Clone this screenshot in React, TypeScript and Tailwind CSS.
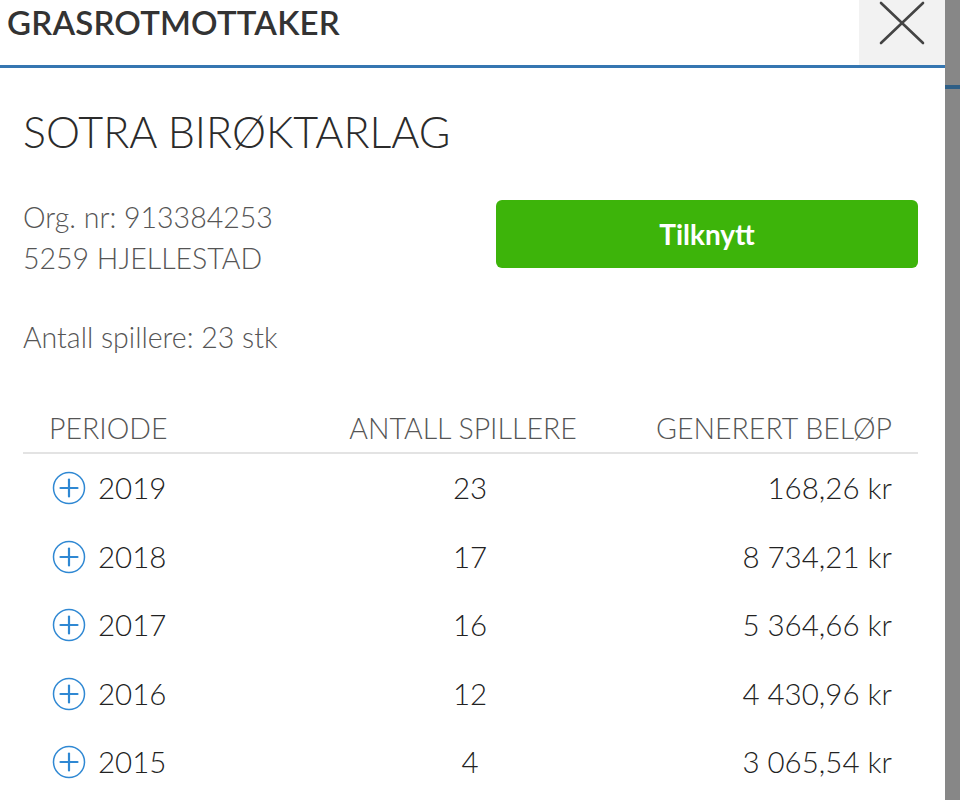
interface Row {
  year: string;
  players: number;
  amount: string;
}

const rows: Row[] = [
  { year: '2019', players: 23, amount: '168,26 kr' },
  { year: '2018', players: 17, amount: '8 734,21 kr' },
  { year: '2017', players: 16, amount: '5 364,66 kr' },
  { year: '2016', players: 12, amount: '4 430,96 kr' },
  { year: '2015', players: 4, amount: '3 065,54 kr' },
];

function PlusCircle() {
  return (
    <svg width="34" height="34" viewBox="0 0 34 34" fill="none" stroke="#2f88d3" strokeLinecap="round">
      <circle cx="17" cy="17" r="15.5" strokeWidth="1.5" />
      <line x1="17" y1="8.5" x2="17" y2="25.5" strokeWidth="2.2" />
      <line x1="8.5" y1="17" x2="25.5" y2="17" strokeWidth="2.2" />
    </svg>
  );
}

export default function App() {
  return (
    <div className="flex h-[800px] w-[960px] overflow-hidden bg-[#878787] font-['Lato',sans-serif]">
      {/* Modal */}
      <div className="flex w-[945px] flex-col bg-white">
        {/* Header */}
        <div className="flex h-[65px] items-start justify-between">
          <h2 className="pl-[7px] pt-[2px] text-[33px] font-semibold leading-[40px] tracking-[0.2px] text-[#333]">
            GRASROTMOTTAKER
          </h2>
          <button className="flex h-[65px] w-[86px] items-start justify-center bg-[#f2f2f2] pt-[1px]">
            <svg width="46" height="44" viewBox="0 0 46 44" fill="none" stroke="#444" strokeWidth="2.6" strokeLinecap="round">
              <line x1="2" y1="2" x2="44" y2="42" />
              <line x1="44" y1="2" x2="2" y2="42" />
            </svg>
          </button>
        </div>
        <div className="h-[3px] bg-[#3576b1]" />

        {/* Body */}
        <div className="flex flex-col px-[23px] pt-[39px]">
          <h1 className="text-[43px] font-light leading-[50px] text-[#2b2b2b]">SOTRA BIRØKTARLAG</h1>

          <div className="mt-[32px] flex items-start justify-between">
            <div className="pt-[8px] text-[28.5px] font-light leading-[41px] text-[#555]">
              <div>Org. nr: 913384253</div>
              <div>5259 HJELLESTAD</div>
            </div>
            <button className="mr-[4px] mt-[11px] h-[68px] w-[422px] rounded-[6px] bg-[#3db40a] text-[28px] font-bold text-white">
              Tilknytt
            </button>
          </div>

          <div className="mt-[38px] text-[28.5px] font-light leading-[41px] text-[#555]">
            Antall spillere: 23 stk
          </div>

          {/* Table */}
          <div className="mt-[51px] mr-[4px]">
            <div className="grid grid-cols-[300px_228px_1fr] border-b-2 border-[#e3e3e3] px-[26px] pb-[5px] text-[28.5px] font-light leading-[38px] text-[#555]">
              <div>PERIODE</div>
              <div className="text-center whitespace-nowrap">ANTALL SPILLERE</div>
              <div className="text-right whitespace-nowrap">GENERERT BELØP</div>
            </div>
            {rows.map((row) => (
              <div
                key={row.year}
                className="grid h-[68.5px] grid-cols-[300px_228px_1fr] items-center px-[26px] text-[29.5px] font-light text-[#222]"
              >
                <div className="flex items-center gap-[12px] pl-[3px]">
                  <PlusCircle />
                  <span>{row.year}</span>
                </div>
                <div className="pl-[14px] text-center">{row.players}</div>
                <div className="text-right">{row.amount}</div>
              </div>
            ))}
          </div>
        </div>
      </div>

      {/* Backdrop strip */}
      <div className="flex-1 pt-[85px]">
        <div className="h-[4px] bg-[#2f5f86]" />
      </div>
    </div>
  );
}
